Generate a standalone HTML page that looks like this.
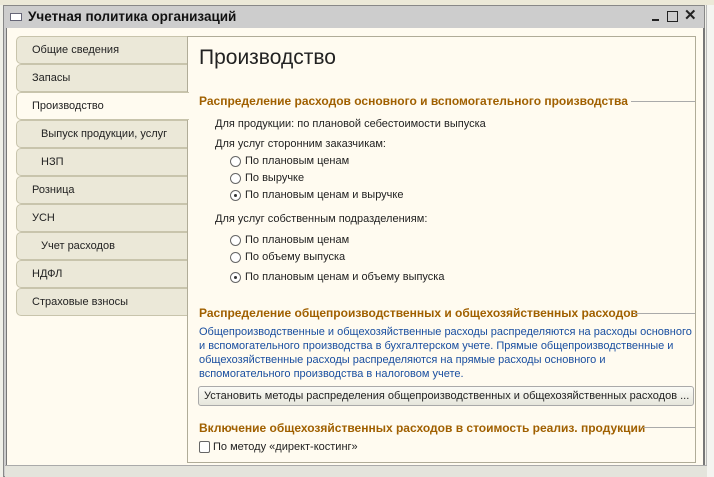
<!DOCTYPE html>
<html><head><meta charset="utf-8"><style>
*{margin:0;padding:0;box-sizing:border-box}
body{width:714px;height:477px;overflow:hidden;background:#f0f0e8;font-family:"Liberation Sans",sans-serif;font-size:11px;color:#222;position:relative}
.abs{position:absolute}
.win{left:3px;top:5px;width:702px;height:472px;background:#cdcdcd;border:1px solid #888}
.title{left:8px;top:9px;font-weight:bold;font-size:13.5px;color:#111}
.body{left:6px;top:28px;width:699px;height:440px;background:#fffbf0;border-left:1px solid #777;border-right:2px solid #777}
.tab{position:absolute;left:16px;width:172px;height:28px;background:#ebe8d8;border:1px solid #c8c4ac;border-radius:5px 0 0 5px;padding-left:15px;line-height:26px;font-size:11px}
.tab.sub{padding-left:24px}
.tab.act{background:#fffbf0;border-right:none;width:173px}
.panel{left:187px;top:36px;width:509px;height:427px;border:1px solid #b0ac98;background:#fffbf0}
.h{color:#a06000;font-weight:bold;font-size:12px}
.line{height:1px;background:#aaa;}
.radio{position:absolute;width:11px;height:11px;border:1px solid #666;border-radius:50%;background:#fff}
.radio.on::after{content:"";position:absolute;left:3px;top:3px;width:3px;height:3px;border-radius:50%;background:#333}
.blue{color:#1a4fa0}
</style></head><body>
<div class="abs" style="left:0;top:0;width:714px;height:5px;background:#ece9d8"></div>
<div class="abs win"></div>
<div class="abs" style="left:10px;top:13px;width:12px;height:8px;border:1px solid #667;background:#fff"></div>
<div class="abs title" style="left:28px">Учетная политика организаций</div>
<div class="abs" style="left:652px;top:19px;width:7px;height:2px;background:#222"></div>
<div class="abs" style="left:667px;top:11px;width:11px;height:11px;border:1.5px solid #222"></div>
<div class="abs" style="left:684px;top:6px;font-size:15px;font-weight:bold;color:#222">✕</div>
<div class="abs body"></div>
<div class="abs" style="left:706px;top:5px;width:8px;height:472px;background:#f4f4f0;border-left:1px solid #bbb"></div>
<div class="abs" style="left:5px;top:465px;width:702px;height:12px;background:#e4e4dc;border-top:1px solid #aaa"></div>

<div class="tab" style="top:36px">Общие сведения</div>
<div class="tab" style="top:64px">Запасы</div>
<div class="tab sub" style="top:120px">Выпуск продукции, услуг</div>
<div class="tab sub" style="top:148px">НЗП</div>
<div class="tab" style="top:176px">Розница</div>
<div class="tab" style="top:204px">УСН</div>
<div class="tab sub" style="top:232px">Учет расходов</div>
<div class="tab" style="top:260px">НДФЛ</div>
<div class="tab" style="top:288px">Страховые взносы</div>
<div class="abs panel"></div>
<div class="tab act" style="top:92px;z-index:2">Производство</div>

<div class="abs" style="left:199px;top:46px;font-size:21px;color:#222">Производство</div>
<div class="abs h" style="left:199px;top:94px">Распределение расходов основного и вспомогательного производства</div>
<div class="abs line" style="left:631px;top:101px;width:64px"></div>
<div class="abs" style="left:215px;top:118px">Для продукции: по плановой себестоимости выпуска</div>
<div class="abs" style="left:215px;top:138px">Для услуг сторонним заказчикам:</div>
<div class="radio abs" style="left:230px;top:156px"></div><div class="abs" style="left:245px;top:155px">По плановым ценам</div>
<div class="radio abs" style="left:230px;top:173px"></div><div class="abs" style="left:245px;top:172px">По выручке</div>
<div class="radio on abs" style="left:230px;top:190px"></div><div class="abs" style="left:245px;top:189px">По плановым ценам и выручке</div>
<div class="abs" style="left:215px;top:213px">Для услуг собственным подразделениям:</div>
<div class="radio abs" style="left:230px;top:235px"></div><div class="abs" style="left:245px;top:234px">По плановым ценам</div>
<div class="radio abs" style="left:230px;top:252px"></div><div class="abs" style="left:245px;top:251px">По объему выпуска</div>
<div class="radio on abs" style="left:230px;top:272px"></div><div class="abs" style="left:245px;top:271px">По плановым ценам и объему выпуска</div>

<div class="abs h" style="left:199px;top:306px">Распределение общепроизводственных и общехозяйственных расходов</div>
<div class="abs line" style="left:635px;top:313px;width:60px"></div>
<div class="abs blue" style="left:199px;top:325px;width:495px;line-height:14px">Общепроизводственные и общехозяйственные расходы распределяются на расходы основного и вспомогательного производства в бухгалтерском учете. Прямые общепроизводственные и общехозяйственные расходы распределяются на прямые расходы основного и вспомогательного производства в налоговом учете.</div>
<div class="abs" style="left:198px;top:386px;width:496px;height:20px;border:1px solid #aaa;border-radius:3px;background:linear-gradient(#fbfbf6,#e6e6dc);padding-left:5px;line-height:18px">Установить методы распределения общепроизводственных и общехозяйственных расходов ...</div>
<div class="abs h" style="left:199px;top:421px">Включение общехозяйственных расходов в стоимость реализ. продукции</div>
<div class="abs line" style="left:643px;top:427px;width:52px"></div>
<div class="abs" style="left:199px;top:441px;width:11px;height:12px;border:1px solid #666;border-radius:2px;background:#fff"></div>
<div class="abs" style="left:213px;top:441px">По методу «директ-костинг»</div>
</body></html>
